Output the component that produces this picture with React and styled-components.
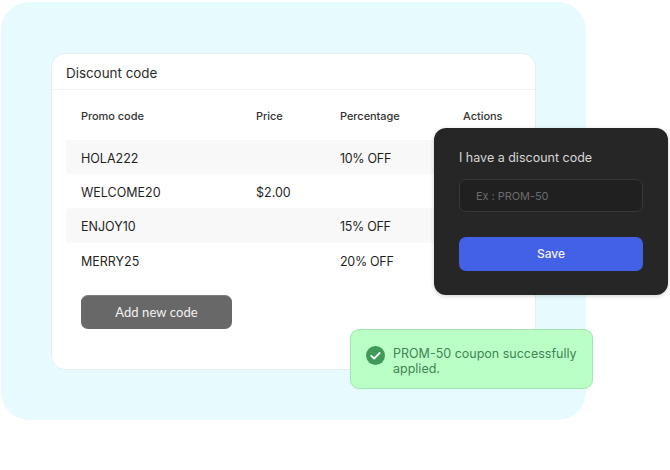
import React from "react";
import styled, { createGlobalStyle } from "styled-components";

const Global = createGlobalStyle`
  html, body { margin: 0; padding: 0; background: #fff; }
  body { font-family: Inter, "Liberation Sans", sans-serif; }
`;

const Stage = styled.div`
  position: relative;
  width: 670px;
  height: 470px;
  overflow: hidden;
  padding: 2px 0 0 1px;
  box-sizing: border-box;
`;

const Panel = styled.div`
  width: 585px;
  height: 418px;
  padding: 51px 50px 0 50px;
  box-sizing: border-box;
  background: #e7fbff;
  border-radius: 28px;
`;

const Card = styled.section`
  width: 485px;
  height: 317px;
  box-sizing: border-box;
  background: #fff;
  border: 1px solid #e3eef0;
  border-radius: 14px;
`;

const CardTitle = styled.h2`
  margin: 0;
  height: 36px;
  box-sizing: border-box;
  padding: 10px 0 0 14px;
  font-size: 13.4px;
  line-height: 19px;
  font-weight: 400;
  color: #2b2b2b;
  border-bottom: 1px solid #f1f3f4;
`;

const Table = styled.div`
  padding: 0 14px;
`;

const Columns = "175px 84px 123px 1fr";

const HeadRow = styled.div`
  display: grid;
  grid-template-columns: ${Columns};
  height: 50px;
  box-sizing: border-box;
  padding: 2px 15px 0;
  align-items: center;
  font-size: 11px;
  font-weight: 450;
  letter-spacing: -0.05px;
  color: #333;
`;

const Row = styled.div`
  display: grid;
  grid-template-columns: ${Columns};
  height: ${(p) => p.$h}px;
  box-sizing: border-box;
  padding: 2px 15px 0;
  align-items: center;
  font-size: 12.5px;
  color: #1f1f1f;
  background: ${(p) => (p.$shaded ? "#f8f8f8" : "transparent")};
  border-radius: 4px;
`;

const Percent = styled.span`
  letter-spacing: -0.3px;
`;

const AddButton = styled.button`
  display: block;
  margin: 18px 0 0 29px;
  width: 151px;
  height: 34px;
  padding: 0 0 2px;
  border: 1px solid #7f7f7f;
  border-width: 1px 0 0;
  border-radius: 7px;
  background: #686868;
  color: #f2f2f2;
  font-family: Lato, sans-serif;
  font-size: 13px;
  letter-spacing: 0.1px;
`;

const Dark = styled.div`
  position: absolute;
  left: 434px;
  top: 128px;
  width: 234px;
  height: 167px;
  box-sizing: border-box;
  padding: 22px 25px 0;
  background: #262626;
  border-radius: 12px;
  box-shadow: 0 1px 4px rgba(0, 0, 0, 0.18);
`;

const DarkLabel = styled.div`
  font-size: 12.5px;
  line-height: 16px;
  color: #d6d6d6;
`;

const CodeInput = styled.div`
  margin-top: 13px;
  height: 33px;
  box-sizing: border-box;
  padding-left: 16px;
  display: flex;
  align-items: center;
  background: #202020;
  border: 1px solid #383838;
  border-radius: 7px;
  font-size: 11px;
  letter-spacing: -0.05px;
  color: #6b6b6b;
`;

const SaveButton = styled.button`
  display: block;
  margin-top: 25px;
  width: 184px;
  height: 34px;
  padding: 0 0 2px;
  border: 0;
  border-radius: 7px;
  background: #4361e6;
  color: #f2f4ff;
  font-family: Inter, sans-serif;
  font-size: 12px;
  font-weight: 500;
`;

const Toast = styled.div`
  position: absolute;
  left: 350px;
  top: 329px;
  width: 243px;
  height: 60px;
  box-sizing: border-box;
  display: flex;
  gap: 8px;
  padding: 16px 10px 0 15px;
  background: #baffc6;
  border: 1px solid #a3e5b2;
  border-radius: 9px;
  color: #3f8454;
  font-size: 12.5px;
  line-height: 15px;
`;

const Check = styled.svg`
  flex: none;
  width: 19px;
  height: 19px;
`;

const rows = [
  { code: "HOLA222", price: "", pct: "10% OFF", h: 34, shaded: true },
  { code: "WELCOME20", price: "$2.00", pct: "", h: 34 },
  { code: "ENJOY10", price: "", pct: "15% OFF", h: 35, shaded: true },
  { code: "MERRY25", price: "", pct: "20% OFF", h: 34 },
];

export default function App() {
  return (
    <Stage>
      <Global />
      <Panel>
        <Card>
          <CardTitle>Discount code</CardTitle>
          <Table>
            <HeadRow>
              <span>Promo code</span>
              <span>Price</span>
              <span>Percentage</span>
              <span>Actions</span>
            </HeadRow>
            {rows.map((r) => (
              <Row key={r.code} $h={r.h} $shaded={r.shaded}>
                <span>{r.code}</span>
                <span>{r.price}</span>
                <Percent>{r.pct}</Percent>
                <span />
              </Row>
            ))}
          </Table>
          <AddButton>Add new code</AddButton>
        </Card>
      </Panel>
      <Dark>
        <DarkLabel>I have a discount code</DarkLabel>
        <CodeInput>Ex : PROM-50</CodeInput>
        <SaveButton>Save</SaveButton>
      </Dark>
      <Toast>
        <Check viewBox="0 0 19 19">
          <circle cx="9.5" cy="9.5" r="9.5" fill="#3f9a58" />
          <path d="M5.3 9.8l2.9 2.8 5.5-5.7" fill="none" stroke="#fff" strokeWidth="1.8" strokeLinecap="round" strokeLinejoin="round" />
        </Check>
        <span>PROM-50 coupon successfully applied.</span>
      </Toast>
    </Stage>
  );
}
